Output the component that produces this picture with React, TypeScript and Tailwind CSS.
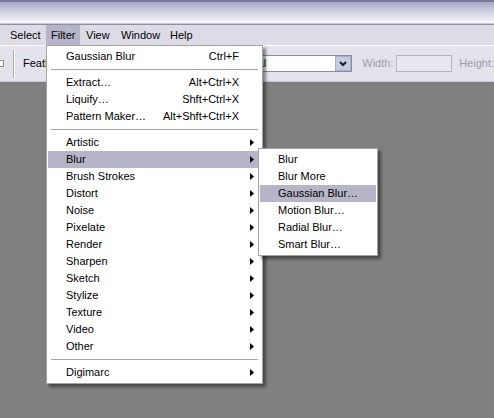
import React from "react";

const Arrow = () => (
  <svg width="4" height="7" viewBox="0 0 4 7" className="block">
    <polygon points="0,0 4,3.5 0,7" fill="#000" />
  </svg>
);

type Item = { label: string; shortcut?: string; sub?: boolean; hl?: boolean } | "sep";

const items: Item[] = [
  { label: "Gaussian Blur", shortcut: "Ctrl+F" },
  "sep",
  { label: "Extract…", shortcut: "Alt+Ctrl+X" },
  { label: "Liquify…", shortcut: "Shft+Ctrl+X" },
  { label: "Pattern Maker…", shortcut: "Alt+Shft+Ctrl+X" },
  "sep",
  { label: "Artistic", sub: true },
  { label: "Blur", sub: true, hl: true },
  { label: "Brush Strokes", sub: true },
  { label: "Distort", sub: true },
  { label: "Noise", sub: true },
  { label: "Pixelate", sub: true },
  { label: "Render", sub: true },
  { label: "Sharpen", sub: true },
  { label: "Sketch", sub: true },
  { label: "Stylize", sub: true },
  { label: "Texture", sub: true },
  { label: "Video", sub: true },
  { label: "Other", sub: true },
  "sep",
  { label: "Digimarc", sub: true },
];

const subItems = [
  { label: "Blur" },
  { label: "Blur More" },
  { label: "Gaussian Blur…", hl: true },
  { label: "Motion Blur…" },
  { label: "Radial Blur…" },
  { label: "Smart Blur…" },
];

export default function App() {
  return (
    <div
      className="relative w-[494px] h-[418px] overflow-hidden bg-[#808080] text-[11px] text-black flex flex-col"
      style={{ fontFamily: '"Liberation Sans", Arial, sans-serif' }}
    >
      {/* title bar */}
      <div className="h-[25px] shrink-0 flex flex-col">
        <div className="h-[2px] bg-[#7a789c]" />
        <div className="flex-1 bg-gradient-to-b from-[#a6a4c4] via-[#d4d3e2] to-[#f7f7fa]" />
        <div className="h-[1px] bg-[#c8c7d6]" />
        <div className="h-[1px] bg-[#8f8ea6]" />
      </div>
      {/* menubar */}
      <div className="h-[20px] shrink-0 bg-[#dddce6] flex items-center">
        <div className="pl-[10px] w-[46px]">Select</div>
        <div className="w-[34px] h-full bg-[#b6b5c7] flex items-center pl-[5px]">Filter</div>
        <div className="pl-[6px] w-[40px]">View</div>
        <div className="pl-[1px] w-[50px]">Window</div>
        <div>Help</div>
      </div>
      {/* toolbar */}
      <div className="h-[36px] shrink-0 bg-[#e4e3eb] border-t border-white flex items-center">
        <div className="w-[4px] h-[7px] border border-l-0 border-[#8a8a8a] bg-white" />
        <div className="ml-[9px] w-[2px] h-[28px] border-l border-[#a8a7b6] border-r border-r-white" />
        <div className="ml-[8px] w-[60px]">Feather:</div>
        <div className="ml-[100px] w-[170px] h-[17px] bg-white border border-[#8d8da0] flex items-center justify-between">
          <span className="pl-[47px]">Normal</span>
          <div className="w-[16px] h-[15px] bg-[#c4cddf] border border-[#a6b0c6] flex items-center justify-center">
            <svg width="8" height="6" viewBox="0 0 8 6">
              <polyline points="1,1 4,4 7,1" fill="none" stroke="#1a1a3a" strokeWidth="2" />
            </svg>
          </div>
        </div>
        <div className="ml-[10px] w-[30px] text-[#9c9cab]">Width:</div>
        <div className="ml-[4px] w-[56px] h-[17px] bg-[#e9e8ee] border border-[#b3b2c0]" />
        <div className="ml-[7px] text-[#9c9cab] whitespace-nowrap">Height:</div>
      </div>
      <div className="h-[1px] bg-[#c9c8d3] shrink-0" />
      {/* canvas */}
      <div className="flex-1 bg-[#808080]" />

      {/* Filter menu */}
      <div className="absolute left-[46px] top-[45px] w-[217px] bg-white border border-[#a3a3a3] pt-[2px] pb-[2px] px-[1px] shadow-[3px_3px_3px_rgba(0,0,0,0.45)]">
        {items.map((it, i) =>
          it === "sep" ? (
            <div key={i} className="h-[9px] flex items-center px-[3px]">
              <div className="h-[1px] w-full bg-[#a6a6a6]" />
            </div>
          ) : (
            <div
              key={i}
              className={`h-[17px] flex items-center pl-[18px] pr-[7px] ${it.hl ? "bg-[#b6b5c7]" : ""}`}
            >
              <span className="flex-1 whitespace-nowrap">{it.label}</span>
              {it.shortcut && <span className="pr-[15px] whitespace-nowrap">{it.shortcut}</span>}
              {it.sub && <Arrow />}
            </div>
          )
        )}
      </div>

      {/* Blur submenu */}
      <div className="absolute left-[258px] top-[148px] w-[120px] bg-white border border-[#a3a3a3] pt-[2px] pb-[2px] px-[1px] shadow-[3px_3px_3px_rgba(0,0,0,0.45)]">
        {subItems.map((it, i) => (
          <div
            key={i}
            className={`h-[17px] flex items-center pl-[18px] whitespace-nowrap ${it.hl ? "bg-[#b6b5c7]" : ""}`}
          >
            {it.label}
          </div>
        ))}
      </div>
    </div>
  );
}
